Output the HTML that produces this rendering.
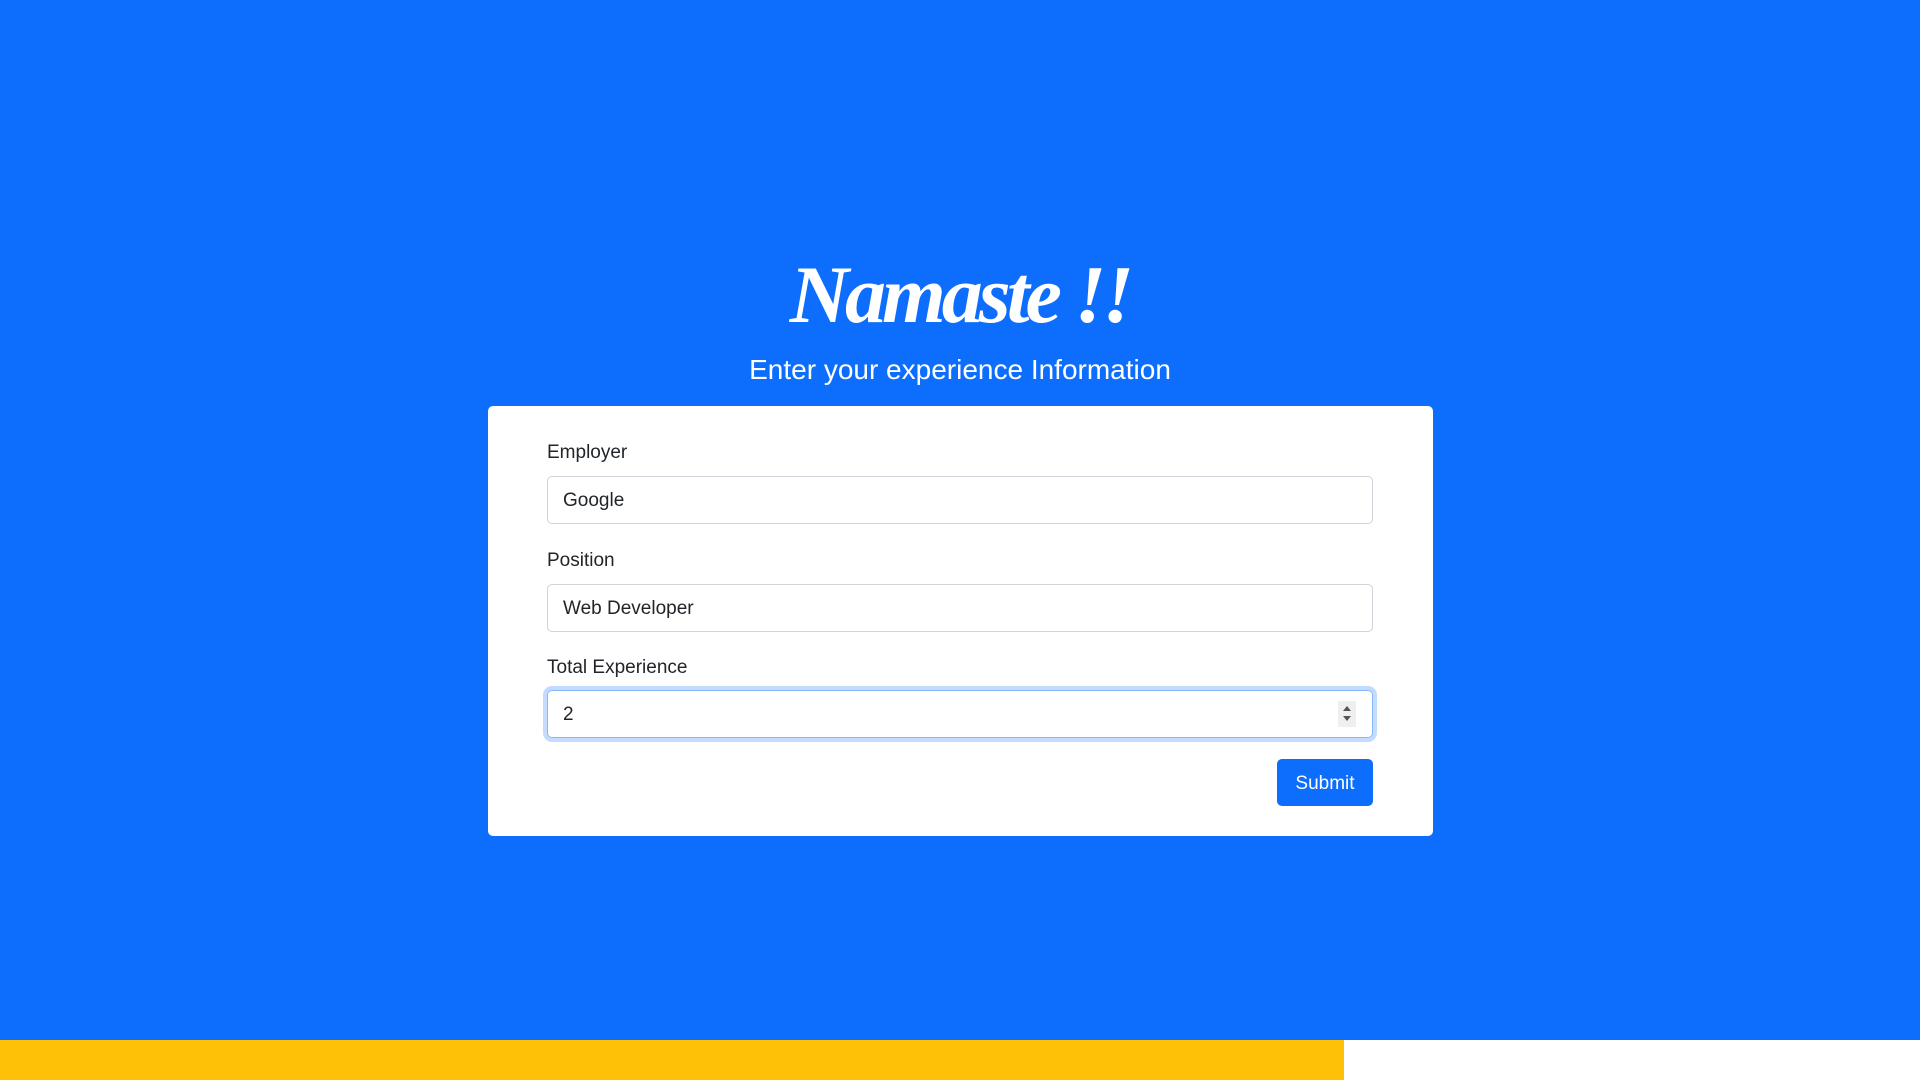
<!DOCTYPE html>
<html><head><style>
*{box-sizing:border-box;margin:0;padding:0}
body{width:1920px;height:1080px;background:#0d6efd;position:relative;overflow:hidden;font-family:"Liberation Sans",sans-serif;color:#212529}
h1{position:absolute;top:250px;left:0;width:1920px;text-align:center;color:#fff;font-family:"Liberation Serif",serif;font-style:italic;font-weight:bold;font-size:82px;line-height:90px;letter-spacing:-4px}
.sub{position:absolute;top:350px;left:0;width:1920px;text-align:center;color:#fff;font-size:28px;font-weight:300;line-height:40px}
.card{position:absolute;left:488px;top:406px;width:945px;height:430px;background:#fff;border-radius:5px}
label{position:absolute;left:59px;font-size:19px;line-height:24px}
.in{position:absolute;left:59px;width:826px;height:48px;border:1px solid #ced4da;border-radius:5px;font-size:19px;padding:0 15px;line-height:48px}
.focus{border-color:#86b7fe;box-shadow:0 0 0 4px #c2dbfe}
.spin{position:absolute;right:16px;top:10px;width:18px;height:26px;background:#efefef}
.spin:before{content:"";position:absolute;left:5px;top:5px;border:4px solid transparent;border-bottom:5px solid #555;border-top:0}
.spin:after{content:"";position:absolute;left:5px;top:15px;border:4px solid transparent;border-top:5px solid #555;border-bottom:0}
.btn{position:absolute;left:789px;top:353px;width:96px;height:47px;background:#0d6efd;color:#fff;border-radius:5px;font-size:19px;text-align:center;line-height:49px}
.y{position:absolute;left:0;top:1040px;width:1344px;height:40px;background:#ffc107}
.w{position:absolute;left:1344px;top:1040px;width:576px;height:40px;background:#fff}
</style></head><body>
<h1>Namaste !!</h1>
<div class="sub">Enter your experience Information</div>
<div class="card">
<label style="top:35px">Employer</label>
<div class="in" style="top:70px">Google</div>
<label style="top:143px">Position</label>
<div class="in" style="top:178px">Web Developer</div>
<label style="top:250px">Total Experience</label>
<div class="in focus" style="top:284px">2<div class="spin"></div></div>
<div class="btn">Submit</div>
</div>
<div class="y"></div><div class="w"></div>
</body></html>
